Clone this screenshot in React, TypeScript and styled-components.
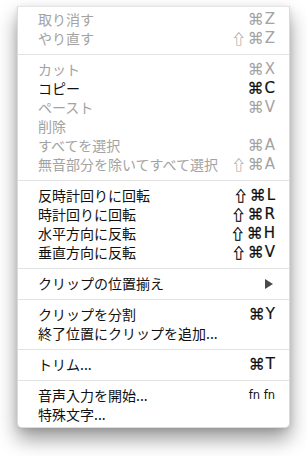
import React from 'react';
import styled, { createGlobalStyle } from 'styled-components';

const GlobalStyle = createGlobalStyle`
  html, body {
    margin: 0;
    padding: 0;
    background: #ffffff;
  }
  body {
    width: 307px;
    height: 456px;
    overflow: hidden;
    font-family: "Noto Sans CJK JP", "Noto Sans", sans-serif;
  }
`;

const Menu = styled.div`
  box-sizing: border-box;
  width: 273px;
  margin: 6px 0 0 17px;
  padding: 3px 0 3px;
  background: #ffffff;
  border: 1px solid rgba(0, 0, 0, 0.14);
  border-top-color: rgba(0, 0, 0, 0.1);
  border-radius: 0 0 5px 5px;
  box-shadow: 0 11px 20px rgba(0, 0, 0, 0.4), 0 2px 6px rgba(0, 0, 0, 0.1);
`;

const Item = styled.div<{ $disabled?: boolean }>`
  height: 19px;
  display: flex;
  align-items: center;
  justify-content: space-between;
  padding: 0 14px 0 20px;
  color: ${(p) => (p.$disabled ? '#a3a3a3' : '#111111')};
`;

const Label = styled.span`
  font-size: 14px;
  line-height: 19px;
  white-space: nowrap;
`;

const Shortcut = styled.span<{ $small?: boolean; $disabled?: boolean }>`
  display: flex;
  align-items: center;
  font-family: "DejaVu Sans", "Liberation Sans", sans-serif;
  font-size: ${(p) => (p.$small ? '11.5px' : '15px')};
  line-height: 19px;
  white-space: nowrap;
  -webkit-text-stroke: ${(p) => (p.$small || p.$disabled ? '0' : '0.2px')};
`;

const Shift = styled.span<{ $disabled?: boolean }>`
  font-family: "Noto Sans CJK JP", "DejaVu Sans", sans-serif;
  font-size: 14px;
  margin-right: 2px;
  -webkit-text-stroke: ${(p) => (p.$disabled ? '0.1px' : '0.4px')};
`;

const Cmd = styled.span`
  font-size: 16px;
  margin-right: 1px;
`;

const Arrow = styled.span`
  width: 0;
  height: 0;
  margin-right: 2px;
  border-top: 5px solid transparent;
  border-bottom: 5px solid transparent;
  border-left: 8px solid #4a4a4a;
`;

const Separator = styled.div`
  height: 12px;
  display: flex;
  align-items: center;
  &::after {
    content: '';
    flex: 1;
    height: 1px;
    background: #e3e3e3;
  }
`;

type Entry = { label: string; key?: string; shift?: boolean; disabled?: boolean; sub?: boolean; fn?: boolean };

const groups: Entry[][] = [
  [
    { label: '取り消す', key: 'Z', disabled: true },
    { label: 'やり直す', key: 'Z', shift: true, disabled: true },
  ],
  [
    { label: 'カット', key: 'X', disabled: true },
    { label: 'コピー', key: 'C' },
    { label: 'ペースト', key: 'V', disabled: true },
    { label: '削除', disabled: true },
    { label: 'すべてを選択', key: 'A', disabled: true },
    { label: '無音部分を除いてすべて選択', key: 'A', shift: true, disabled: true },
  ],
  [
    { label: '反時計回りに回転', key: 'L', shift: true },
    { label: '時計回りに回転', key: 'R', shift: true },
    { label: '水平方向に反転', key: 'H', shift: true },
    { label: '垂直方向に反転', key: 'V', shift: true },
  ],
  [{ label: 'クリップの位置揃え', sub: true }],
  [
    { label: 'クリップを分割', key: 'Y' },
    { label: '終了位置にクリップを追加...' },
  ],
  [{ label: 'トリム...', key: 'T' }],
  [
    { label: '音声入力を開始...', key: 'fn fn', fn: true },
    { label: '特殊文字...' },
  ],
];

export default function App() {
  return (
    <>
      <GlobalStyle />
      <Menu>
        {groups.map((group, gi) => (
          <React.Fragment key={gi}>
            {gi > 0 && <Separator />}
            {group.map((e) => (
              <Item key={e.label} $disabled={e.disabled}>
                <Label>{e.label}</Label>
                {e.sub ? (
                  <Arrow />
                ) : (
                  e.key && (
                    <Shortcut $small={e.fn} $disabled={e.disabled}>
                      {e.shift && <Shift $disabled={e.disabled}>⇧</Shift>}
                      {!e.fn && <Cmd>⌘</Cmd>}
                      {e.key}
                    </Shortcut>
                  )
                )}
              </Item>
            ))}
          </React.Fragment>
        ))}
      </Menu>
    </>
  );
}
